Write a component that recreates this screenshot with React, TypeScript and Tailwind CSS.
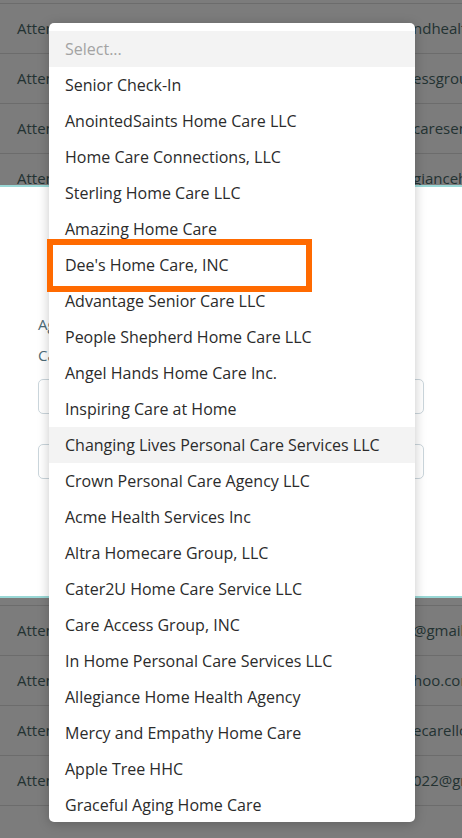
import React from "react";

const topRows = [
  { label: "Attendant", email: "ndhealthcare" },
  { label: "Attendant", email: "essgroup" },
  { label: "Attendant", email: "caresenior" },
  { label: "Attendant", email: "giancehealth" },
];

const bottomRows = [
  { label: "Attendant", email: "@gmail.com" },
  { label: "Attendant", email: "hoo.com" },
  { label: "Attendant", email: "ecarellc" },
  { label: "Attendant", email: "022@gmail" },
  { label: "", email: "" },
];

const options = [
  "Senior Check-In",
  "AnointedSaints Home Care LLC",
  "Home Care Connections, LLC",
  "Sterling Home Care LLC",
  "Amazing Home Care",
  "Dee's Home Care, INC",
  "Advantage Senior Care LLC",
  "People Shepherd Home Care LLC",
  "Angel Hands Home Care Inc.",
  "Inspiring Care at Home",
  "Changing Lives Personal Care Services LLC",
  "Crown Personal Care Agency LLC",
  "Acme Health Services Inc",
  "Altra Homecare Group, LLC",
  "Cater2U Home Care Service LLC",
  "Care Access Group, INC",
  "In Home Personal Care Services LLC",
  "Allegiance Home Health Agency",
  "Mercy and Empathy Home Care",
  "Apple Tree HHC",
  "Graceful Aging Home Care",
];

const Row = ({ label, email }: { label: string; email: string }) => (
  <div className="h-[50px] shrink-0 border-t border-[#6c6c6c] flex items-center overflow-hidden text-[15px] text-[#233232] whitespace-nowrap">
    <span className="w-[413px] shrink-0 pl-[17px]">{label}</span>
    <span className="shrink-0">{email}</span>
  </div>
);

export default function App() {
  return (
    <div
      className="relative w-[462px] h-[838px] overflow-hidden bg-[#7c7c7c] flex flex-col"
      style={{ fontFamily: '"Open Sans", "Noto Sans", sans-serif' }}
    >
      {/* Dimmed table, top */}
      <section className="h-[185px] shrink-0 overflow-hidden pt-[3px] flex flex-col">
        {topRows.map((r, i) => (
          <Row key={i} label={r.label} email={r.email} />
        ))}
      </section>

      {/* Panel */}
      <section className="h-[413px] shrink-0 bg-white border-y-2 border-[#9ad8d6] px-[38px] pt-[130px] flex flex-col">
        <div className="text-[15px] text-[#4d6b76] leading-none">Agency</div>
        <div className="text-[15px] text-[#4d6b76] leading-none mt-[16px]">Caregiver</div>
        <div className="mt-[16px] h-[35px] w-[386px] rounded-[5px] border border-[#cbd6dc]" />
        <div className="mt-[30px] h-[35px] w-[386px] rounded-[5px] border border-[#cbd6dc]" />
      </section>

      {/* Dimmed table, bottom */}
      <section className="flex-1 overflow-hidden pt-[7px] flex flex-col">
        {bottomRows.map((r, i) => (
          <Row key={i} label={r.label} email={r.email} />
        ))}
      </section>

      {/* Dropdown menu */}
      <div className="absolute left-[49px] top-[23px] w-[366px] h-[799px] overflow-hidden rounded-[5px] bg-white pt-2 shadow-[0_2px_12px_rgba(0,0,0,0.22)]">
        <div className="h-9 flex items-center px-4 bg-[#f3f3f3] text-[16px] text-[#a3a3a3]">
          Select...
        </div>
        {options.map((o) => (
          <div
            key={o}
            className={
              "h-9 flex items-center px-4 text-[16px] text-[#2b2b2b] whitespace-nowrap " +
              (o.startsWith("Changing") ? "bg-[#f3f3f3]" : "")
            }
          >
            {o}
          </div>
        ))}
      </div>

      {/* Annotation box */}
      <div className="absolute left-[47px] top-[239px] w-[265px] h-[53px] border-[6px] border-[#ff6a00]" />
    </div>
  );
}
